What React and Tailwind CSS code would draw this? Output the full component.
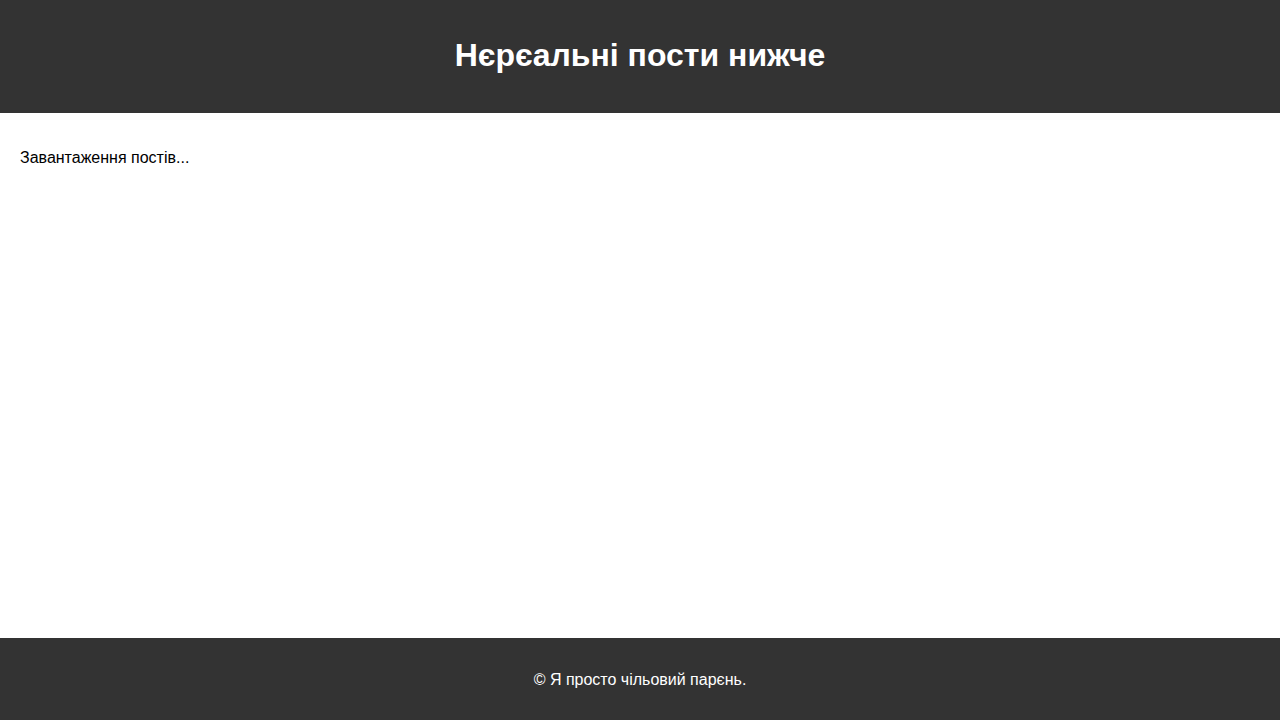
export default function App() {
  return (
    <div className="min-h-screen flex flex-col bg-white" style={{ fontFamily: '"Liberation Sans", Arial, sans-serif' }}>
      <header className="h-[113px] bg-[#333333] text-white flex items-center justify-center">
        <h1 className="text-[32px] font-bold leading-[37px] pb-[2px]">Нєрєальні пости нижче</h1>
      </header>
      <main className="flex-1 p-5">
        <p className="my-4 text-base leading-[18px] text-black">Завантаження постів...</p>
      </main>
      <footer className="h-[82px] bg-[#333333] text-white flex items-center justify-center">
        <p className="text-base leading-[18px] pt-[1px]">© Я просто чільовий парєнь.</p>
      </footer>
    </div>
  );
}
